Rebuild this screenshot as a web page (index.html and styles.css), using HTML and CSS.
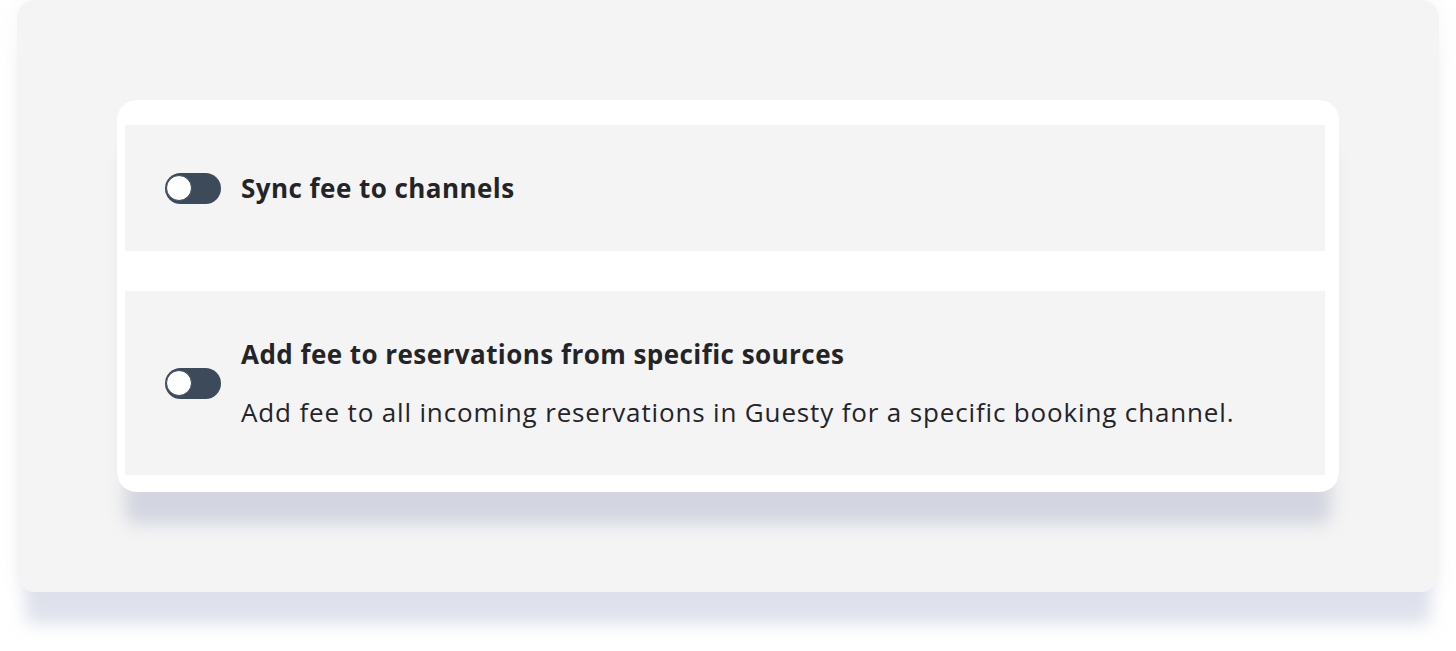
FILE: index.html
```html
<!DOCTYPE html>
<html lang="en">
<head>
<meta charset="utf-8">
<title>Fee settings</title>
<link rel="stylesheet" href="styles.css">
</head>
<body>
<div class="frame">
  <div class="panel">
    <div class="row">
      <span class="toggle"><span class="knob"></span></span>
      <div class="text">
        <div class="title">Sync fee to channels</div>
      </div>
    </div>
    <div class="row row-tall">
      <span class="toggle"><span class="knob"></span></span>
      <div class="text">
        <div class="title">Add fee to reservations from specific sources</div>
        <div class="desc">Add fee to all incoming reservations in Guesty for a specific booking channel.</div>
      </div>
    </div>
  </div>
</div>
</body>
</html>
```

FILE: styles.css
```css
html, body {
  margin: 0;
  padding: 0;
  background: #ffffff;
}
body {
  font-family: "Open Sans", "Noto Sans", sans-serif;
  color: #242428;
  width: 1456px;
  height: 651px;
  overflow: hidden;
}
.frame {
  margin-left: 17px;
  width: 1422px;
  height: 592px;
  box-sizing: border-box;
  padding: 100px 100px 0 100px;
  background: #f4f4f4;
  border-radius: 18px;
  box-shadow: 0 40px 16px -8px rgba(196, 202, 220, 0.55), 0 0 18px rgba(190, 196, 214, 0.15);
}
.panel {
  background: #ffffff;
  border-radius: 20px;
  padding: 25px 14px 17px 8px;
  display: flex;
  flex-direction: column;
  gap: 40px;
  box-shadow: 0 40px 16px -8px rgba(200, 204, 218, 0.75);
}
.row {
  background: #f4f4f4;
  display: flex;
  align-items: center;
  gap: 20px;
  padding: 40px 40px;
}
.text {
  display: flex;
  flex-direction: column;
  gap: 12px;
}
.title {
  font-size: 26px;
  line-height: 46px;
  font-weight: 700;
  letter-spacing: 0.45px;
}
.desc {
  font-size: 26px;
  line-height: 46px;
  font-weight: 400;
  letter-spacing: 0.85px;
}
.toggle {
  flex: none;
  width: 56px;
  height: 31px;
  border-radius: 16px;
  background: #3d4a5a;
  display: flex;
  align-items: center;
  padding-left: 1px;
  box-sizing: border-box;
}
.knob {
  width: 26px;
  height: 26px;
  border-radius: 50%;
  background: #ffffff;
  border: 1px solid #3d4a5a;
  box-sizing: border-box;
}
```
